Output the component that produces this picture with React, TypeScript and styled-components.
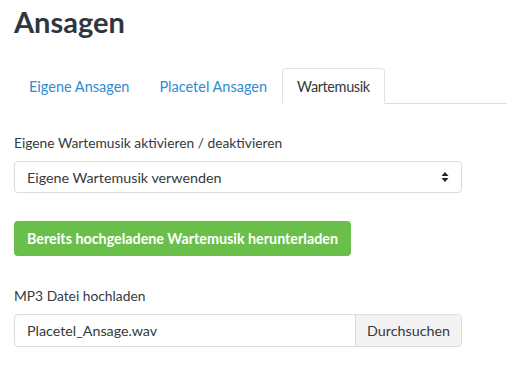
import styled, { createGlobalStyle } from "styled-components";

const GlobalStyle = createGlobalStyle`
  body {
    margin: 0;
    background: #ffffff;
    font-family: Lato, "Open Sans", sans-serif;
    color: #333a40;
  }
`;

const Page = styled.div`
  width: 507px;
  padding: 0 0 0 14px;
  box-sizing: border-box;
`;

const Title = styled.h1`
  margin: 0;
  padding-top: 5px;
  font-size: 29px;
  line-height: 34px;
  font-weight: 700;
  color: #2f3640;
`;

const TabBar = styled.ul`
  display: flex;
  list-style: none;
  margin: 29px 0 0 0;
  padding: 0;
  border-bottom: 1px solid #dddddd;
`;

const Tab = styled.li`
  margin-bottom: -1px;
  padding: 0 14px;
  height: 34px;
  display: flex;
  align-items: center;
  font-size: 14.5px;
  border: 1px solid
    ${({ active }: { active?: boolean }) => (active ? "#e3e3e3" : "transparent")};
  border-bottom-color: ${({ active }: { active?: boolean }) =>
    active ? "#ffffff" : "transparent"};
  border-radius: 4px 4px 0 0;
  color: ${({ active }: { active?: boolean }) => (active ? "#333a40" : "#2d8dd0")};
  letter-spacing: ${({ active }: { active?: boolean }) => (active ? "-0.4px" : "0")};
  background: #ffffff;
  cursor: pointer;
`;

const Form = styled.div`
  width: 448px;
  padding-top: 30px;
`;

const Label = styled.div`
  font-size: 13.8px;
  line-height: 18px;
  margin-bottom: 9px;
`;

const Select = styled.div`
  height: 32px;
  box-sizing: border-box;
  border: 1px solid #dcdcdc;
  border-radius: 4px;
  display: flex;
  align-items: center;
  justify-content: space-between;
  padding: 0 12px;
  font-size: 14.3px;
`;

const Green = styled.button`
  margin-top: 28px;
  height: 35px;
  padding: 0 13px;
  border: none;
  border-radius: 4px;
  background: #6abf4b;
  color: #ffffff;
  font-family: inherit;
  font-size: 14.3px;
  font-weight: 700;
  cursor: pointer;
`;

const Group = styled.div`
  margin-top: 31px;
`;

const FileBox = styled.div`
  height: 33px;
  box-sizing: border-box;
  border: 1px solid #dcdcdc;
  border-radius: 4px;
  display: flex;
  overflow: hidden;
  font-size: 14.3px;
`;

const FileName = styled.div`
  flex: 1;
  display: flex;
  align-items: center;
  padding: 0 12px;
`;

const Browse = styled.div`
  display: flex;
  align-items: center;
  padding: 0 11px;
  background: #f3f3f3;
  border-left: 1px solid #dcdcdc;
`;

const Arrows = () => (
  <svg width="8" height="12" viewBox="0 0 8 12">
    <path d="M4 1 L7.5 5 H0.5 Z" fill="#222" />
    <path d="M4 11 L7.5 7 H0.5 Z" fill="#222" />
  </svg>
);

export default function App() {
  return (
    <Page>
      <GlobalStyle />
      <Title>Ansagen</Title>
      <TabBar>
        <Tab>Eigene Ansagen</Tab>
        <Tab>Placetel Ansagen</Tab>
        <Tab active>Wartemusik</Tab>
      </TabBar>
      <Form>
        <Label>Eigene Wartemusik aktivieren / deaktivieren</Label>
        <Select>
          <span>Eigene Wartemusik verwenden</span>
          <Arrows />
        </Select>
        <Green>Bereits hochgeladene Wartemusik herunterladen</Green>
        <Group>
          <Label>MP3 Datei hochladen</Label>
          <FileBox>
            <FileName>Placetel_Ansage.wav</FileName>
            <Browse>Durchsuchen</Browse>
          </FileBox>
        </Group>
      </Form>
    </Page>
  );
}
